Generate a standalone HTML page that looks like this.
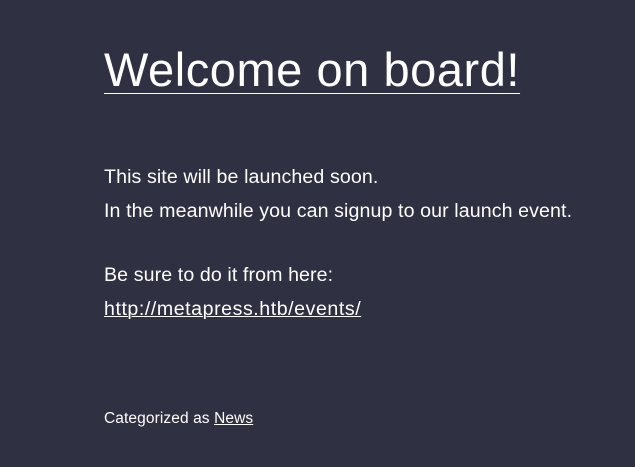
<!DOCTYPE html>
<html><head><meta charset="utf-8"><style>
html,body{margin:0;padding:0;background:#2f3041;width:635px;height:467px;overflow:hidden}
body{font-family:"Liberation Sans","DejaVu Sans",sans-serif;color:#fff;position:relative}
h1{position:absolute;left:104px;top:40px;margin:0;font-weight:400;font-size:47px;line-height:60px;text-decoration:underline;text-decoration-thickness:1px;text-underline-offset:7px;letter-spacing:0.55px}
.p{position:absolute;left:104px;font-size:19.6px;line-height:34px;margin:0;white-space:nowrap;letter-spacing:0.1px}
a{color:#fff;text-decoration:underline;text-decoration-thickness:1px}
.l{letter-spacing:0.55px}
.c{position:absolute;left:104px;top:408px;font-size:15.5px;line-height:22px;letter-spacing:0.1px}
</style></head><body>
<h1>Welcome on board!</h1>
<p class="p" style="top:160px">This site will be launched soon.<br>In the meanwhile you can signup to our launch event.</p>
<p class="p" style="top:258px">Be sure to do it from here:<br><a class="l">http://metapress.htb/events/</a></p>
<div class="c">Categorized as <a>News</a></div>
</body></html>
